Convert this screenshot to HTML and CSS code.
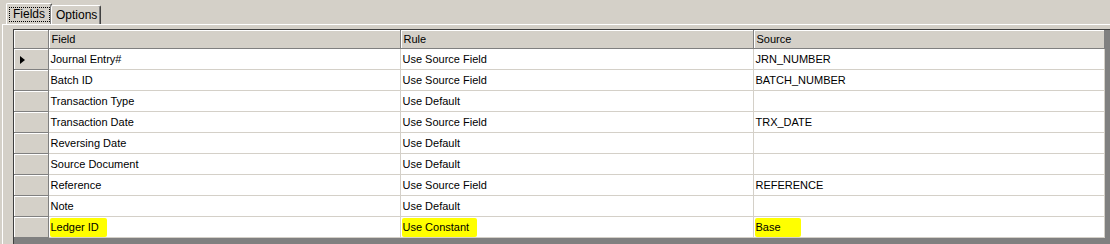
FILE: index.html
```html
<!DOCTYPE html>
<html>

<head>
    <link rel="stylesheet" href="styles.css">
    <title>Fields</title>
</head>

<body>
    <div class="tabs">
        <div class="tab active"><span class="focus">Fields</span></div>
        <div class="tab">Options</div>
    </div>

    <div class="panel">
        <div class="grid-frame">
            <table class="grid">
                <colgroup>
                    <col class="c-sel">
                    <col class="c-field">
                    <col class="c-rule">
                    <col class="c-source">
                </colgroup>
                <tr>
                    <th class="sel"></th>
                    <th>Field</th>
                    <th>Rule</th>
                    <th>Source</th>
                </tr>
                <tr>
                    <td class="sel"><span class="arrow"></span></td>
                    <td>Journal Entry#</td>
                    <td>Use Source Field</td>
                    <td>JRN_NUMBER</td>
                </tr>
                <tr>
                    <td class="sel"></td>
                    <td>Batch ID</td>
                    <td>Use Source Field</td>
                    <td>BATCH_NUMBER</td>
                </tr>
                <tr>
                    <td class="sel"></td>
                    <td>Transaction Type</td>
                    <td>Use Default</td>
                    <td></td>
                </tr>
                <tr>
                    <td class="sel"></td>
                    <td>Transaction Date</td>
                    <td>Use Source Field</td>
                    <td>TRX_DATE</td>
                </tr>
                <tr>
                    <td class="sel"></td>
                    <td>Reversing Date</td>
                    <td>Use Default</td>
                    <td></td>
                </tr>
                <tr>
                    <td class="sel"></td>
                    <td>Source Document</td>
                    <td>Use Default</td>
                    <td></td>
                </tr>
                <tr>
                    <td class="sel"></td>
                    <td>Reference</td>
                    <td>Use Source Field</td>
                    <td>REFERENCE</td>
                </tr>
                <tr>
                    <td class="sel"></td>
                    <td>Note</td>
                    <td>Use Default</td>
                    <td></td>
                </tr>
                <tr>
                    <td class="sel"></td>
                    <td><span class="mark">Ledger ID</span></td>
                    <td><span class="mark">Use Constant</span></td>
                    <td><span class="mark mark-wide">Base</span></td>
                </tr>
            </table>
        </div>
    </div>
</body>

</html>
```

FILE: styles.css
```css
body {
    margin: 0;
    height: 244px;
    overflow: hidden;
    background: #d4d0c8;
    font-family: "Liberation Sans", Arial, sans-serif;
    font-size: 11px;
    color: #000000;
}

.tabs {
    display: flex;
    align-items: flex-end;
    height: 24px;
    padding-left: 6px;
}

.tab {
    height: 18px;
    padding: 0 3px 0 4px;
    line-height: 18px;
    font-size: 12px;
    border-top: 1px solid #ffffff;
    border-left: 1px solid #ffffff;
    border-right: 1px solid #404040;
    border-radius: 2px 2px 0 0;
    box-shadow: inset -1px 0 #808080;
}

.tab.active {
    height: 20px;
    line-height: 20px;
    padding: 0 1px 0 2px;
    margin-right: -1px;
}

.focus {
    display: inline-block;
    line-height: 13px;
    padding: 0 4px 0 3px;
    border: 1px dotted #000000;
}

.panel {
    height: 220px;
    margin-left: 2px;
    padding: 4px 0 0 10px;
    border-top: 1px solid #ffffff;
    border-left: 1px solid #ffffff;
}

.grid-frame {
    height: 215px;
    background: #808080;
    border-top: 1px solid #404040;
    border-left: 1px solid #404040;
}

.grid {
    border-collapse: collapse;
    table-layout: fixed;
    width: 1090px;
}

.c-sel {
    width: 34px;
}

.c-field {
    width: 352px;
}

.c-rule {
    width: 353px;
}

.c-source {
    width: 351px;
}

th {
    height: 18px;
    padding: 0 0 0 3px;
    text-align: left;
    font-weight: normal;
    background: #d4d0c8;
    border-right: 1px solid #808080;
    border-bottom: 1px solid #808080;
    box-shadow: inset 1px 1px #ffffff;
}

td {
    height: 20px;
    padding: 0 0 0 2px;
    background: #ffffff;
    border-right: 1px solid #d4d0c8;
    border-bottom: 1px solid #d4d0c8;
    white-space: nowrap;
}

.sel {
    background: #d4d0c8;
    border-right: 1px solid #808080;
    border-bottom: 1px solid #808080;
    box-shadow: inset 1px 1px #ffffff;
}

.arrow {
    display: inline-block;
    margin-left: 4px;
    border-top: 4px solid transparent;
    border-bottom: 4px solid transparent;
    border-left: 5px solid #000000;
    vertical-align: middle;
}

.mark {
    display: inline-block;
    margin-left: -1px;
    padding: 3px 8px 4px 1px;
    background: #ffff00;
    border-radius: 2px;
}

.mark-wide {
    padding-right: 20px;
}
```
